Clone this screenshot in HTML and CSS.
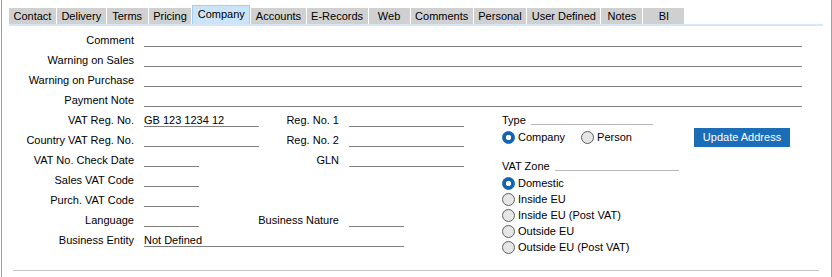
FILE: index.html
```html
<!DOCTYPE html>
<html lang="en">
<head>
  <meta charset="UTF-8">
  <title>Company</title>
  <link rel="stylesheet" href="styles.css">
</head>
<body>
  <div class="frame">
    <div class="tabs">
      <span class="tab">Contact</span>
      <span class="tab">Delivery</span>
      <span class="tab">Terms</span>
      <span class="tab">Pricing</span>
      <span class="tab active">Company</span>
      <span class="tab">Accounts</span>
      <span class="tab">E-Records</span>
      <span class="tab">Web</span>
      <span class="tab">Comments</span>
      <span class="tab">Personal</span>
      <span class="tab">User Defined</span>
      <span class="tab">Notes</span>
      <span class="tab">BI</span>
    </div>

    <div class="form">
      <div class="row"><label class="lbl">Comment</label><span class="field wide"></span></div>
      <div class="row"><label class="lbl">Warning on Sales</label><span class="field wide"></span></div>
      <div class="row"><label class="lbl">Warning on Purchase</label><span class="field wide"></span></div>
      <div class="row"><label class="lbl">Payment Note</label><span class="field wide"></span></div>

      <div class="lower">
        <div class="grid">
          <label class="lbl">VAT Reg. No.</label>
          <span class="field">GB 123 1234 12</span>
          <label class="lbl">Reg. No. 1</label>
          <span class="field"></span>

          <label class="lbl">Country VAT Reg. No.</label>
          <span class="field"></span>
          <label class="lbl">Reg. No. 2</label>
          <span class="field"></span>

          <label class="lbl">VAT No. Check Date</label>
          <span class="field short"></span>
          <label class="lbl">GLN</label>
          <span class="field"></span>

          <label class="lbl">Sales VAT Code</label>
          <span class="field short"></span>
          <span></span><span></span>

          <label class="lbl">Purch. VAT Code</label>
          <span class="field short"></span>
          <span></span><span></span>

          <label class="lbl">Language</label>
          <span class="field short"></span>
          <label class="lbl">Business Nature</label>
          <span class="field short"></span>

          <label class="lbl">Business Entity</label>
          <span class="field entity">Not Defined</span>
        </div>

        <div class="side">
          <div class="group-head type-head">
            <span>Type</span><span class="rule"></span>
          </div>
          <div class="type-row">
            <span class="opt"><span class="radio on"></span>Company</span>
            <span class="opt"><span class="radio"></span>Person</span>
            <button class="btn">Update Address</button>
          </div>

          <div class="group-head vat-head">
            <span>VAT Zone</span><span class="rule"></span>
          </div>
          <div class="vat-list">
            <span class="opt"><span class="radio on"></span>Domestic</span>
            <span class="opt"><span class="radio"></span>Inside EU</span>
            <span class="opt"><span class="radio"></span>Inside EU (Post VAT)</span>
            <span class="opt"><span class="radio"></span>Outside EU</span>
            <span class="opt"><span class="radio"></span>Outside EU (Post VAT)</span>
          </div>
        </div>
      </div>
    </div>

    <div class="sep"></div>
  </div>
</body>
</html>
```

FILE: styles.css
```css
body {
  margin: 0;
  font-family: "Liberation Sans", Arial, sans-serif;
  font-size: 11px;
  color: #000;
  background: #fff;
}

.frame {
  margin-left: 1px;
  width: 829px;
  height: 277px;
  border-left: 1px solid #a0a0a0;
  border-right: 1px solid #a0a0a0;
}

/* tab strip */
.tabs {
  display: flex;
  align-items: flex-end;
  gap: 1px;
  height: 24px;
  margin: 0 8px 0 7px;
  border-bottom: 2px solid #d6e7f7;
}

.tab {
  height: 16px;
  line-height: 16px;
  padding: 0 4.5px;
  min-width: 32px;
  text-align: center;
  background: #d0d0d0;
}

.tab.active {
  height: 18px;
  line-height: 17px;
  background: #cce4f7;
  border: 1px solid #a6cdee;
  border-bottom: none;
}

/* form rows */
.form {
  padding-top: 1px;
}

.row {
  display: flex;
  align-items: flex-end;
  height: 20px;
}

.lbl {
  width: 132px;
  margin-right: 10px;
  line-height: 13px;
  text-align: right;
  white-space: nowrap;
}

.field {
  box-sizing: border-box;
  height: 15px;
  padding-top: 2px;
  line-height: 13px;
  border-bottom: 1px solid #808080;
  white-space: nowrap;
}

.field.wide {
  width: 658px;
}

.lower {
  display: flex;
  align-items: flex-start;
}

.grid {
  display: grid;
  grid-template-columns: 132px 115px 70px 115px;
  grid-auto-rows: 20px;
  column-gap: 10px;
  align-items: end;
}

.grid .lbl {
  width: auto;
  margin-right: 0;
  justify-self: end;
}

.grid .field.short {
  width: 55px;
}

.grid .field.entity {
  grid-column: 2 / 5;
  width: 260px;
}

/* right side: type, vat zone */
.side {
  display: flex;
  flex-direction: column;
  width: 288px;
  margin-left: 38px;
}

.group-head {
  display: flex;
  align-items: flex-end;
  height: 20px;
  line-height: 13px;
}

.group-head .rule {
  flex: 1;
  margin: 0 0 2px 5px;
  border-bottom: 1px solid #b8b8b8;
}

.type-head {
  width: 151px;
}

.vat-head {
  width: 177px;
  margin-top: 6px;
}

.type-row {
  display: flex;
  align-items: center;
  height: 20px;
}

.type-row .opt + .opt {
  margin-left: 16px;
}

.opt {
  display: flex;
  align-items: center;
  gap: 3px;
  height: 16px;
}

.radio {
  box-sizing: border-box;
  width: 13px;
  height: 13px;
  border-radius: 50%;
  border: 1px solid #5e5e5e;
  background: #e6e6e6;
}

.radio.on {
  border-color: #0f64b4;
  background: radial-gradient(circle, #fff 0 2.4px, #0f64b4 3px);
}

.btn {
  width: 96px;
  height: 19px;
  margin-left: auto;
  padding: 0;
  border: none;
  background: #1c6db8;
  color: #fff;
  font-family: inherit;
  font-size: 11px;
}

.vat-list {
  display: flex;
  flex-direction: column;
  margin-top: 2px;
}

.sep {
  margin: 15px 12px 0 11px;
  border-top: 1px solid #c4c4c4;
}
```
